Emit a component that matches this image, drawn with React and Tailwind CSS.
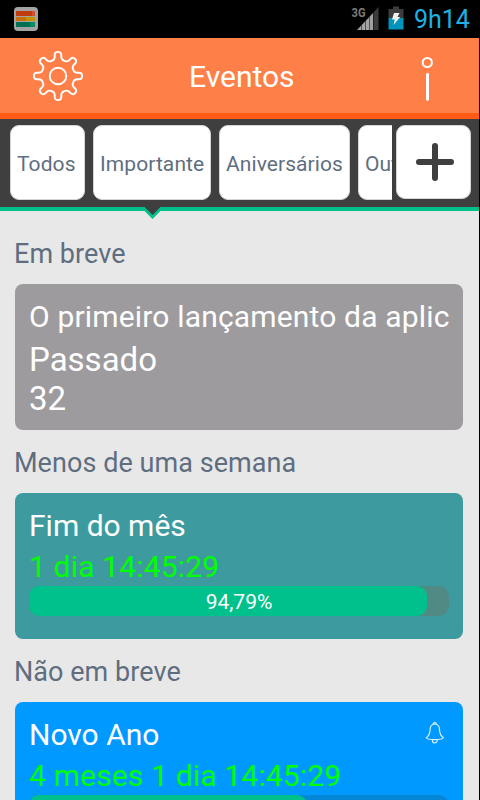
import React from "react";

const tabs = [
  { label: "Todos", size: "w-[75px]" },
  { label: "Importante", size: "w-[118px]" },
  { label: "Aniversários", size: "w-[131px]" },
  { label: "Outros", size: "w-[81px]" },
];

const sections = [
  {
    heading: "Em breve",
    card: {
      title: "O primeiro lançamento da aplic",
      titleSpacing: "tracking-[0.17px]",
      color: "bg-[#9d9b9e]",
      past: true,
      days: "32",
    },
  },
  {
    heading: "Menos de uma semana",
    card: {
      title: "Fim do mês",
      color: "bg-[#3d9b9f]",
      track: "bg-[#518985]",
      left: "1 dia 14:45:29",
      percent: 94.79,
    },
  },
  {
    heading: "Não em breve",
    card: {
      title: "Novo Ano",
      color: "bg-[#0099ff]",
      track: "bg-[#0487d6]",
      left: "4 meses 1 dia 14:45:29",
      percent: 66.3,
      alarm: true,
    },
  },
];

// one tooth of the gear, turned eight times around the centre
const tooth = [
  [-6.3, -15.2],
  [-3.4, -16.2],
  [-3.3, -19],
  [-3.3, -21],
  [-3.3, -25.2],
  [3.3, -25.2],
  [3.3, -21],
  [3.3, -19],
  [3.4, -16.2],
  [6.3, -15.2],
];

const gearPath = () => {
  let d = "";
  for (let i = 0; i < 8; i++) {
    const a = (i * Math.PI) / 4;
    const p = tooth.map(([x, y]) =>
      [
        (x * Math.cos(a) - y * Math.sin(a)).toFixed(2),
        (x * Math.sin(a) + y * Math.cos(a)).toFixed(2),
      ].join(" ")
    );
    d += `${i === 0 ? "M" : "L"}${p[0]}Q${p[1]} ${p[2]}L${p[3]}C${p[4]} ${p[5]} ${p[6]}L${p[7]}Q${p[8]} ${p[9]}`;
  }
  return d + "Z";
};

const GearIcon = () => (
  <svg width="52" height="52" viewBox="-26 -26 52 52" fill="none" stroke="white" strokeWidth="1.9" strokeLinejoin="round">
    <path d={gearPath()} />
    <circle r="8.3" />
  </svg>
);

const InfoIcon = () => (
  <svg className="mt-1" width="14" height="46" viewBox="0 0 14 46" fill="none" stroke="white">
    <circle cx="7.3" cy="7.5" r="4.6" strokeWidth="2" />
    <path d="M7.5 19.3V44.2" strokeWidth="3" strokeLinecap="round" />
  </svg>
);

const BellIcon = () => (
  <svg width="20" height="24" viewBox="0 0 20 24" fill="none" stroke="#d3f0ff" strokeWidth="1.2" strokeLinejoin="round">
    <path d="M8.2 3.3C8.2 1 11.4 1 11.4 3.3" />
    <path d="M9.8 3C6.6 3.2 5.2 5.6 5.1 8.5C5 12.5 4.4 14.6 1.2 16.7C1.5 18 3.5 18.7 9.8 18.7S18.1 18 18.4 16.7C15.2 14.6 14.6 12.5 14.5 8.5C14.4 5.6 13 3.2 9.8 3Z" />
    <path d="M7.4 18.9C7.4 23 12.2 23 12.2 18.9" />
  </svg>
);

const StatusBar = () => (
  <div className="h-[38px] bg-black flex items-center justify-between pl-[14px] pr-[10px]">
    <svg width="24" height="24" viewBox="0 0 24 24">
      <rect width="24" height="24" rx="4" fill="#a3a3a3" />
      <rect x="2" y="4" width="19" height="5" rx="0.5" fill="#d3502a" />
      <rect x="2" y="4" width="16" height="5" rx="0.5" fill="#c03c0e" />
      <rect x="2" y="10" width="19" height="4" rx="0.5" fill="#c59000" />
      <rect x="2" y="10" width="10" height="4" rx="0.5" fill="#c96b08" />
      <rect x="2" y="15" width="19" height="5" rx="0.5" fill="#008a66" />
      <rect x="2" y="15" width="14" height="5" rx="0.5" fill="#006f52" />
    </svg>
    <div className="flex items-center">
      <svg className="mb-[2px]" width="30" height="26" viewBox="0 0 30 26">
        <text x="0.5" y="11.5" fontSize="12.5" fontWeight="700" fill="#7b7b7b" fontFamily="Roboto, sans-serif" textLength="14" lengthAdjust="spacingAndGlyphs">3G</text>
        <path d="M6 25L22 8V25Z" fill="#a2a2a2" />
        <path d="M22 8L27.5 2V25H22Z" fill="#3c3c3c" />
        <path d="M10.5 20V25M14.5 16V25M18.5 12V25M22.5 8V25" stroke="#000" strokeOpacity="0.5" strokeWidth="1" />
      </svg>
      <svg className="ml-[7px] mb-[2px]" width="16" height="24" viewBox="0 0 16 24">
        <path d="M5 0.5H11V3H15.5V12H0.5V3H5Z" fill="#3d3d3d" />
        <rect x="0.5" y="12" width="15" height="11.5" fill="#0094bd" />
        <path d="M6 7H11.5L9.5 11H12.2L5.5 19L6.8 13.5H4Z" fill="#f2f2f2" />
      </svg>
      <span className="ml-[10px] w-[56px] pt-[2px] text-[25px] leading-9 text-[#1fb1e4] whitespace-nowrap">
        9h14
      </span>
    </div>
  </div>
);

const Header = () => (
  <header className="h-[81px] shrink-0 bg-[#ff7f48] border-b-[6px] border-[#ff5b14] grid grid-cols-[157px_1fr_59px] grid-rows-[75px] items-center">
    <div className="pl-8">
      <GearIcon />
    </div>
    <h1 className="text-[30px] text-white leading-10 pl-[32px] pt-[2px]">Eventos</h1>
    <InfoIcon />
  </header>
);

const Tabs = () => (
  <nav className="relative h-[92px] shrink-0 bg-[#3f3f3f] border-b-4 border-[#00c08b] flex pt-[6px] pl-[10px]">
    <div className="w-[382px] flex gap-2 overflow-hidden">
      {tabs.map((tab) => (
        <button
          key={tab.label}
          className={`${tab.size} h-[75px] shrink-0 rounded-[9px] bg-white border border-[#d5d5d5] text-left pl-[6px] pt-1 text-[21px] tracking-[0.08px] text-[#5f6e7f] whitespace-nowrap`}
        >
          {tab.label}
        </button>
      ))}
    </div>
    <button className="ml-1 w-[75px] h-[74px] rounded-[9px] bg-white border border-[#d5d5d5] flex items-center justify-center">
      <svg width="40" height="40" viewBox="0 0 40 40" stroke="#3f3f3f" strokeWidth="6" strokeLinecap="round">
        <path d="M21 4V36M5 20H37" />
      </svg>
    </button>
    {/* pointer under the selected tab */}
    <svg className="absolute left-[144px] top-[88px]" width="17" height="12" viewBox="0 0 17 12">
      <path d="M0.5 4L8.5 12L16.5 4V0H0.5Z" fill="#00c08b" />
      <path d="M0.5 0H16.5L8.5 8Z" fill="#3f3f3f" />
    </svg>
  </nav>
);

const EventCard = ({ card }) => {
  return (
    <div className={`${card.color} relative h-[146px] rounded-[8px] px-[14px] pt-[13px] text-white`}>
      <div className={`${card.titleSpacing || ""} text-[30px] leading-10 whitespace-nowrap`}>{card.title}</div>
      {card.past ? (
        <div className="text-[33px] leading-[39px] pt-[3px]">
          <div>Passado</div>
          <div>{card.days}</div>
        </div>
      ) : (
        <>
          <div className="h-10 text-[30px] leading-[42px] tracking-[0.16px] text-[#00ff00] whitespace-nowrap">
            {card.left}
          </div>
          <div className={`${card.track} relative h-[30px] rounded-[10px]`}>
            <div className="h-full rounded-[10px] bg-[#00c08b]" style={{ width: `${card.percent}%` }}></div>
            <span className="absolute inset-0 text-center text-[21px] leading-[33px]">
              {card.percent.toFixed(2).replace(".", ",")}%
            </span>
          </div>
        </>
      )}
      {card.alarm && (
        <div className="absolute right-[18px] top-[19px]">
          <BellIcon />
        </div>
      )}
    </div>
  );
};

const App = () => {
  return (
    <div className="w-[480px] h-[800px] overflow-hidden bg-black font-[Roboto,sans-serif]">
      <StatusBar />
      <div className="w-[479px] h-[762px] flex flex-col bg-[#e8e8e8]">
        <Header />
        <Tabs />
        <main className="flex-1 overflow-hidden pt-[10px] pl-[15px] pr-4">
          {sections.map((section) => (
            <section key={section.heading}>
              <h2 className="h-[63px] -ml-px text-[27px] leading-[66px] tracking-[0.05px] text-[#5f6e7f]">
                {section.heading}
              </h2>
              <EventCard card={section.card} />
            </section>
          ))}
        </main>
      </div>
    </div>
  );
};

export default App;
